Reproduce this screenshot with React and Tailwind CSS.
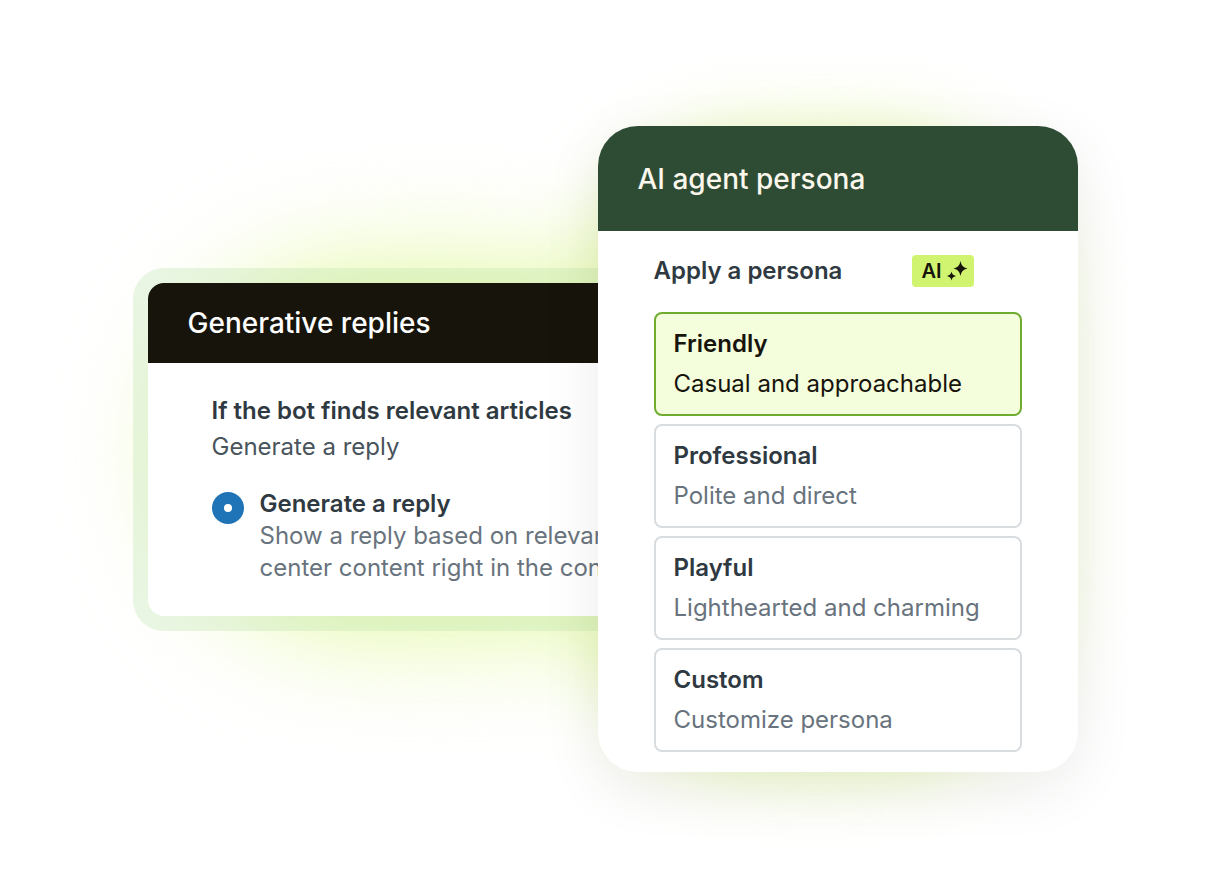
import { useState } from 'react';
import clsx from 'clsx';

const PERSONAS = [
  { id: 'friendly', name: 'Friendly', description: 'Casual and approachable' },
  { id: 'professional', name: 'Professional', description: 'Polite and direct' },
  { id: 'playful', name: 'Playful', description: 'Lighthearted and charming' },
  { id: 'custom', name: 'Custom', description: 'Customize persona' },
];

function Sparkles() {
  return (
    <svg width="22" height="20" viewBox="0 0 22 20" fill="currentColor" aria-hidden="true">
      <path d="M14.500 0 C15.500 4.600 17 6.300 21.500 7.500 C17 8.700 15.500 10.400 14.500 15 C13.500 10.400 12 8.700 7.500 7.500 C12 6.300 13.500 4.600 14.500 0Z" />
      <path d="M5.500 10.500 C6.100 13.100 7.100 14.300 10 15 C7.100 15.700 6.100 16.900 5.500 19.500 C4.900 16.900 3.900 15.700 1 15 C3.900 14.300 4.900 13.100 5.500 10.500Z" />
    </svg>
  );
}

function GenerativeReplies() {
  return (
    <section className="relative -mr-24 min-w-0 flex-1">
      {/* Lime glow */}
      <div className="absolute inset-y-0 right-0 left-12 -z-10 rounded-[180px] bg-[#e2f8a0] blur-[56px]" />
      <div className="rounded-[31px] bg-[#b9e0a8]/30 p-[15px]">
        <div className="overflow-hidden rounded-2xl bg-white">
          <header className="flex h-20 items-center bg-[#17140c] px-10">
            <h2 className="text-[28px] font-medium text-white">Generative replies</h2>
          </header>
          <div className="whitespace-nowrap px-16 pt-[30px] pb-8">
            <h3 className="text-2xl/9 font-semibold text-[#2f3941]">If the bot finds relevant articles</h3>
            <p className="text-2xl/9 text-[#49545c]">Generate a reply</p>
            <div className="mt-[23px] flex gap-4">
              <input
                id="generate-reply"
                type="radio"
                name="reply-mode"
                defaultChecked
                className="mt-1 size-8 shrink-0 appearance-none rounded-full border-12 border-[#1f73b7] bg-white"
              />
              <label htmlFor="generate-reply" className="text-2xl/8 text-[#68737d]">
                <span className="block font-semibold text-[#2f3941]">Generate a reply</span>
                Show a reply based on relevant
                <br />
                center content right in the conv
              </label>
            </div>
          </div>
        </div>
      </div>
    </section>
  );
}

function PersonaOption({ persona, selected, onSelect }) {
  return (
    <label
      className={clsx(
        'block h-[104px] cursor-pointer rounded-lg border-2 px-[18px] py-[10px] text-2xl/10',
        selected ? 'border-[#6fac30] bg-[#f4fddc] text-[#17140c]' : 'border-[#d8dcde] bg-white text-[#68737d]'
      )}
    >
      <input
        type="radio"
        name="persona"
        value={persona.id}
        checked={selected}
        onChange={() => onSelect(persona.id)}
        className="sr-only"
      />
      <span className={clsx('block font-semibold', selected ? 'text-[#17140c]' : 'text-[#2f3941]')}>
        {persona.name}
      </span>
      <span className="block">{persona.description}</span>
    </label>
  );
}

function AgentPersona() {
  const [selected, setSelected] = useState('friendly');

  return (
    <section className="relative w-[480px] shrink-0">
      {/* Lime glow, heavier towards the left card */}
      <div className="absolute inset-y-3 right-9 -left-1 -z-10 rounded-[160px] bg-[#e2f8a0] blur-[40px]" />
      <div className="overflow-hidden rounded-[40px] bg-white shadow-[0_16px_60px_rgba(23,20,12,0.08)]">
        <header className="flex h-[105px] items-center bg-[#2e4c34] px-10">
          <h2 className="text-[28px] font-medium text-[#fbf7ec]">AI agent persona</h2>
        </header>
        <div className="px-14 pt-6 pb-5">
          <div className="flex items-center justify-between pr-12">
            <h3 className="text-2xl/8 font-semibold text-[#2f3941]">Apply a persona</h3>
            <span className="flex h-8 items-center gap-1 rounded-sm bg-[#d1f470] pr-[6px] pl-[9px] text-xl font-semibold text-[#17140c]">
              AI
              <Sparkles />
            </span>
          </div>
          <div className="mt-[25px] flex flex-col gap-2">
            {PERSONAS.map((p) => (
              <PersonaOption key={p.id} persona={p} selected={p.id === selected} onSelect={setSelected} />
            ))}
          </div>
        </div>
      </div>
    </section>
  );
}

export default function App() {
  return (
    <main className="flex min-h-screen items-center justify-center overflow-hidden bg-white pt-3 pr-5 font-['Inter',sans-serif]">
      <div className="isolate flex w-full max-w-[945px] items-center">
        <GenerativeReplies />
        <AgentPersona />
      </div>
    </main>
  );
}
